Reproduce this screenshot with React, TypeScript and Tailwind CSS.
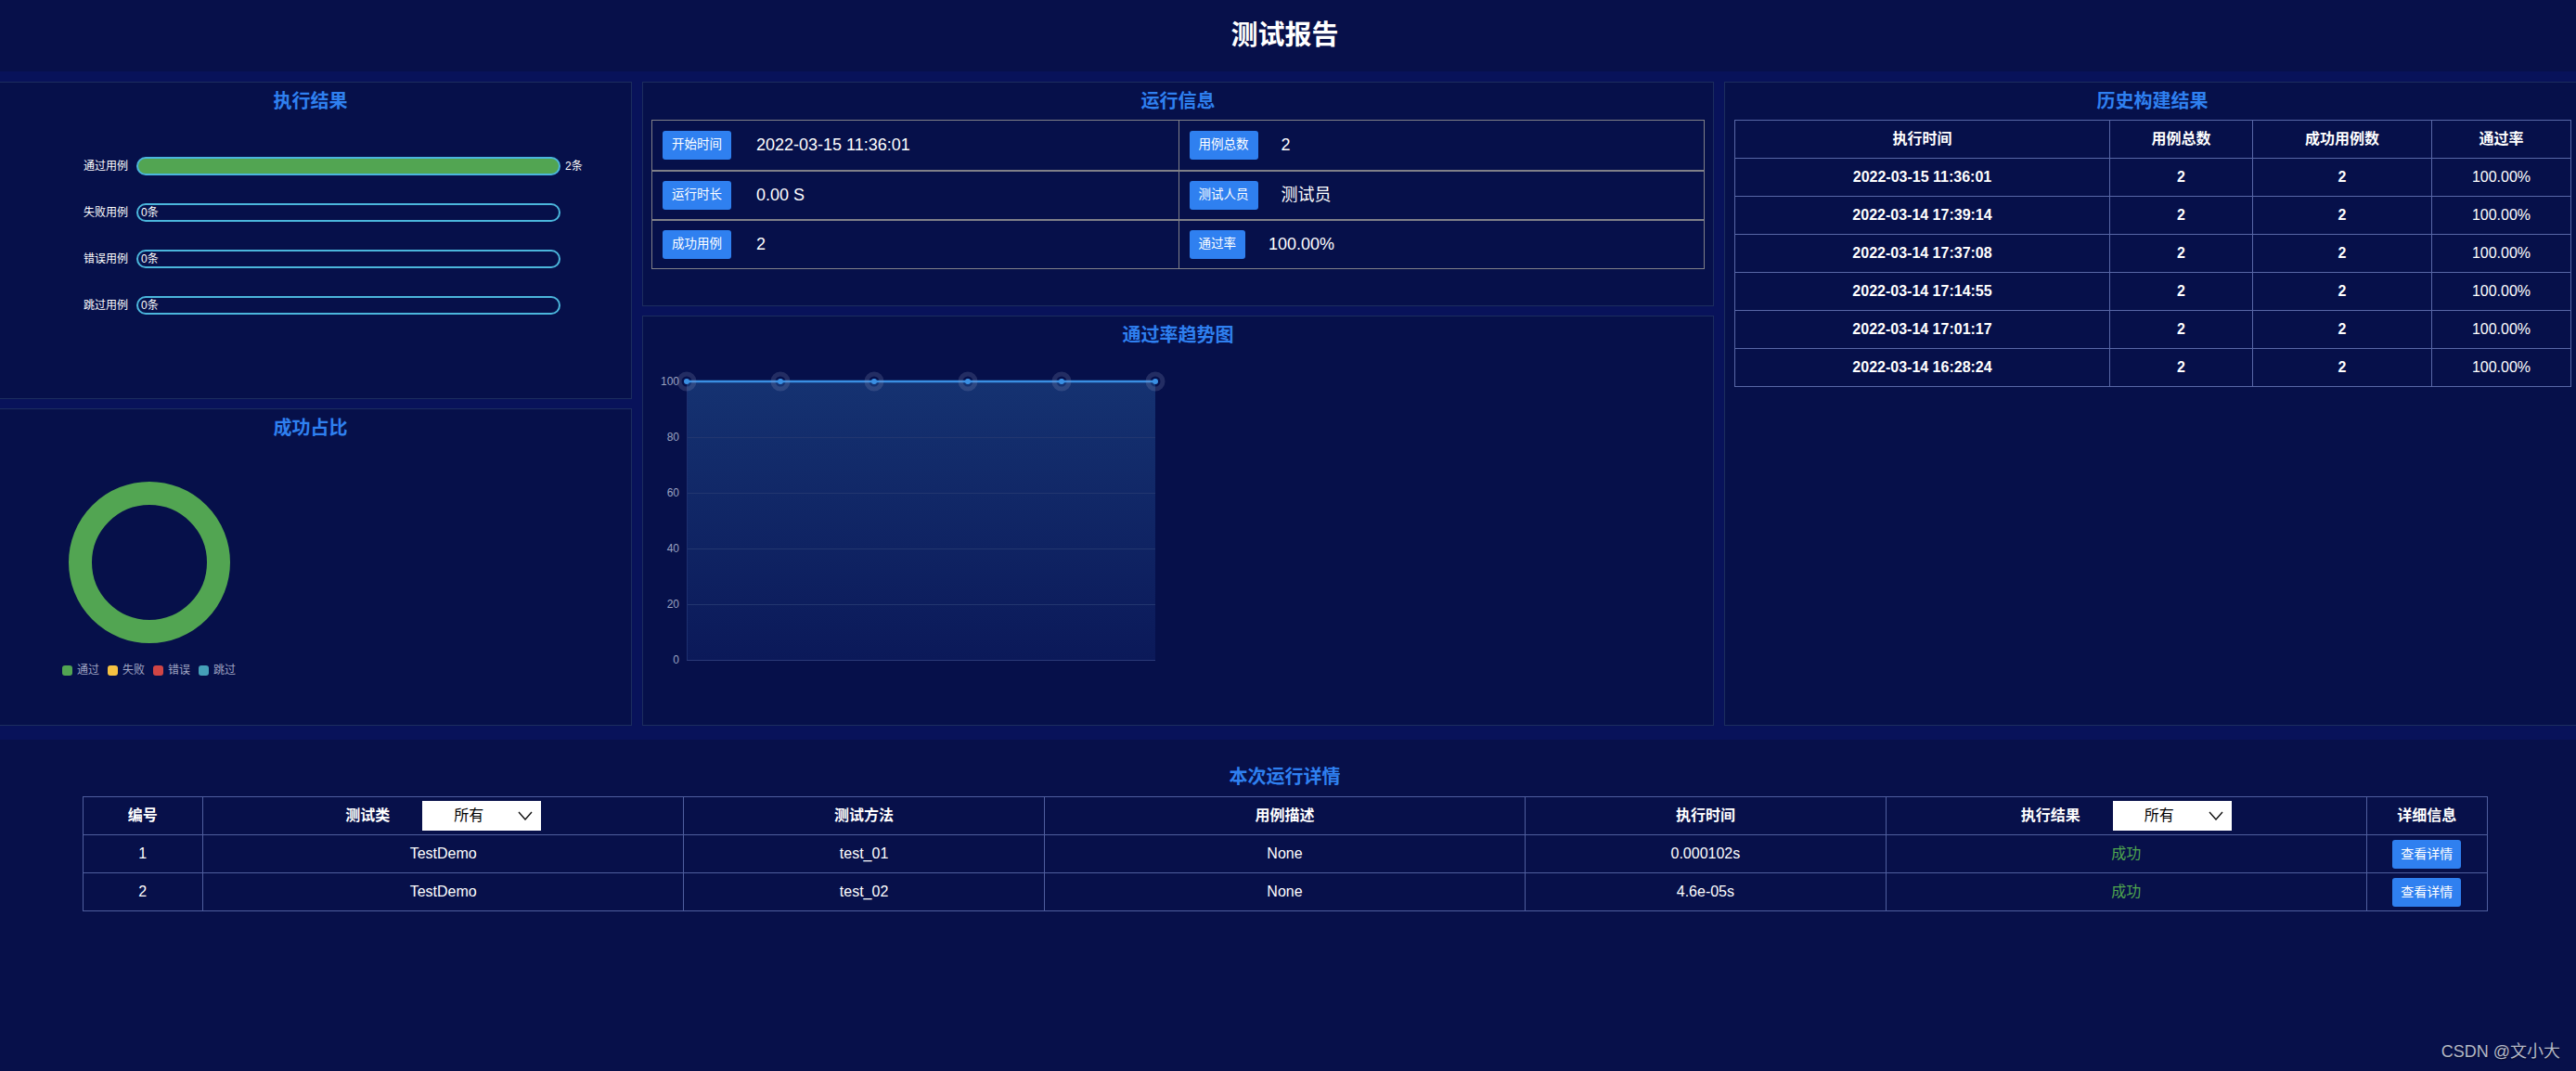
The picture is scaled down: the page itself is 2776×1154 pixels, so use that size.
import { FC, ReactNode } from 'react';

const Panel: FC<{ title: string; className: string; children?: ReactNode }> = ({ title, className, children }) => (
  <div className={`border border-[#1c2d5e] bg-[#06104a] ${className}`}>
    <h3 className="pt-2 text-center text-[20px] leading-6 font-bold text-[#2f80f0]">{title}</h3>
    {children}
  </div>
);

const bars = [
  { label: '通过用例', count: 2 },
  { label: '失败用例', count: 0 },
  { label: '错误用例', count: 0 },
  { label: '跳过用例', count: 0 },
];

const legend = [
  { label: '通过', color: 'bg-[#52a552]' },
  { label: '失败', color: 'bg-[#f5c242]' },
  { label: '错误', color: 'bg-[#d04545]' },
  { label: '跳过', color: 'bg-[#45a0b8]' },
];

const runInfo = [
  [
    { tag: '开始时间', value: '2022-03-15 11:36:01' },
    { tag: '用例总数', value: '2' },
  ],
  [
    { tag: '运行时长', value: '0.00 S' },
    { tag: '测试人员', value: '测试员' },
  ],
  [
    { tag: '成功用例', value: '2' },
    { tag: '通过率', value: '100.00%' },
  ],
];

const history = [
  '2022-03-15 11:36:01',
  '2022-03-14 17:39:14',
  '2022-03-14 17:37:08',
  '2022-03-14 17:14:55',
  '2022-03-14 17:01:17',
  '2022-03-14 16:28:24',
];

const details = [
  { id: 1, cls: 'TestDemo', method: 'test_01', desc: 'None', time: '0.000102s' },
  { id: 2, cls: 'TestDemo', method: 'test_02', desc: 'None', time: '4.6e-05s' },
];

const Tag: FC<{ children: ReactNode }> = ({ children }) => (
  <span className="flex h-[31px] items-center rounded-[3px] bg-[#2f80f0] px-[10px] text-[13.5px] text-white">
    {children}
  </span>
);

const FakeSelect: FC = () => (
  <div className="flex h-[32px] w-[128px] items-center bg-white pl-[34px] pr-[8px] text-[16px] font-normal text-black">
    <span>所有</span>
    <svg width="16" height="10" viewBox="0 0 16 10" className="ml-auto mr-[1px]">
      <polyline points="1,1 8,9 15,1" fill="none" stroke="#111" strokeWidth="1.4" />
    </svg>
  </div>
);

const TrendChart: FC = () => {
  const y = (v: number) => 338 - v * 3;
  const xs = [0, 1, 2, 3, 4, 5].map((i) => 47 + i * 101);
  return (
    <svg width="1153" height="400" className="block">
      <defs>
        <linearGradient id="area" x1="0" y1="0" x2="0" y2="1">
          <stop offset="0" stopColor="#153271" />
          <stop offset="1" stopColor="#0b1959" />
        </linearGradient>
      </defs>
      <rect x={47} y={y(100)} width={505} height={300} fill="url(#area)" />
      {[80, 60, 40, 20].map((v) => (
        <line key={v} x1={47} x2={552} y1={y(v) + 0.5} y2={y(v) + 0.5} stroke="#22366f" />
      ))}
      <line x1={47} x2={552} y1={y(0) + 0.5} y2={y(0) + 0.5} stroke="#2a3a78" />
      <line x1={47.5} x2={47.5} y1={y(100)} y2={y(0)} stroke="#1d3070" />
      {[100, 80, 60, 40, 20, 0].map((v) => (
        <text key={v} x={39} y={y(v) + 4} textAnchor="end" fontSize="12" fill="#9aa2c0">
          {v}
        </text>
      ))}
      <line x1={47} x2={552} y1={y(100)} y2={y(100)} stroke="#3a8fe3" strokeWidth="2.5" />
      {xs.map((x) => (
        <g key={x}>
          <circle cx={x} cy={y(100)} r={8} fill="none" stroke="rgba(140,150,190,0.22)" strokeWidth="5" />
          <circle cx={x} cy={y(100)} r={3} fill="#3a8fe3" />
        </g>
      ))}
    </svg>
  );
};

const App: FC = () => {
  return (
    <div className="relative min-h-screen overflow-hidden bg-[#07104a] font-['Liberation_Sans','Noto_Sans_CJK_SC',sans-serif]">
      <div className="-ml-[12px] w-[2793px]">
        <header className="flex h-[77px] items-center justify-center text-[29px] font-bold text-white">测试报告</header>

        <div className="bg-[#08125a] pt-[11px] pb-[15px]">
          <div className="grid grid-cols-[693px_1155px_923px] gap-[11px]">
            <div className="flex flex-col gap-[10px]">
              <Panel title="执行结果" className="h-[342px]">
                <div className="mt-[33px]">
                  {bars.map((b) => (
                    <div key={b.label} className="flex h-[50px] items-center pl-[91px]">
                      <span className="w-[58px] text-right text-[12px] text-white">{b.label}</span>
                      {b.count > 0 ? (
                        <>
                          <div className="ml-[9px] h-[20px] w-[457px] rounded-full border-2 border-[#4bb6dc] bg-[#52a552]" />
                          <span className="ml-[5px] text-[12px] text-white">{b.count}条</span>
                        </>
                      ) : (
                        <div className="ml-[9px] flex h-[20px] w-[457px] items-center rounded-full border-2 border-[#4bb6dc] pl-[3px] text-[12px] text-white">
                          {b.count}条
                        </div>
                      )}
                    </div>
                  ))}
                </div>
              </Panel>
              <Panel title="成功占比" className="h-[342px]">
                <div className="mt-[46px] pl-[85px]">
                  <svg width="174" height="174" className="block">
                    <circle cx="87" cy="87" r="74.5" fill="none" stroke="#52a552" strokeWidth="25" />
                  </svg>
                </div>
                <div className="mt-[20px] flex gap-[9px] pl-[78px]">
                  {legend.map((l) => (
                    <div key={l.label} className="flex items-center gap-[5px] text-[12px] text-[#a0a6c4]">
                      <span className={`h-[11px] w-[11px] rounded-[3px] ${l.color}`} />
                      {l.label}
                    </div>
                  ))}
                </div>
              </Panel>
            </div>

            <div className="flex flex-col gap-[10px]">
              <Panel title="运行信息" className="h-[242px]">
                <div className="mx-[9px] mt-2 border border-[#808088]">
                  {runInfo.map((row, i) => (
                    <div
                      key={i}
                      className={i > 0 ? 'grid h-[53px] grid-cols-2 border-t-2 border-[#808088]' : 'grid h-[53px] grid-cols-2'}
                    >
                      {row.map((c, j) => (
                        <div
                          key={c.tag}
                          className={
                            j > 0
                              ? 'flex items-center gap-[25px] border-l border-[#808088] pl-[11px]'
                              : 'flex items-center gap-[27px] pl-[11px]'
                          }
                        >
                          <Tag>{c.tag}</Tag>
                          <span className="text-[18px] text-white">{c.value}</span>
                        </div>
                      ))}
                    </div>
                  ))}
                </div>
              </Panel>
              <Panel title="通过率趋势图" className="h-[442px]">
                <TrendChart />
              </Panel>
            </div>

            <Panel title="历史构建结果" className="h-[694px]">
              <table className="mx-[10px] mt-2 w-[901px] table-fixed border-collapse text-[16px] font-bold text-white">
                <colgroup>
                  <col className="w-[404px]" />
                  <col className="w-[154px]" />
                  <col className="w-[193px]" />
                  <col className="w-[150px]" />
                </colgroup>
                <thead>
                  <tr className="h-[41px]">
                    {['执行时间', '用例总数', '成功用例数', '通过率'].map((h) => (
                      <th key={h} className="border border-[#5867a6] text-center">
                        {h}
                      </th>
                    ))}
                  </tr>
                </thead>
                <tbody>
                  {history.map((t) => (
                    <tr key={t} className="h-[41px]">
                      <td className="border border-[#5867a6] text-center">{t}</td>
                      <td className="border border-[#5867a6] text-center">2</td>
                      <td className="border border-[#5867a6] text-center">2</td>
                      <td className="border border-[#5867a6] text-center font-normal">100.00%</td>
                    </tr>
                  ))}
                </tbody>
              </table>
            </Panel>
          </div>
        </div>

        <section className="pt-[28px]">
          <h3 className="text-center text-[20px] leading-6 font-bold text-[#2f80f0]">本次运行详情</h3>
          <table className="mx-auto mt-[9px] w-[2592px] table-fixed border-collapse text-[16px] text-white">
            <colgroup>
              <col className="w-[5%]" />
              <col className="w-[20%]" />
              <col className="w-[15%]" />
              <col className="w-[20%]" />
              <col className="w-[15%]" />
              <col className="w-[20%]" />
              <col className="w-[5%]" />
            </colgroup>
            <thead>
              <tr className="h-[41px] font-bold">
                <th className="border border-[#4f5e9e]">编号</th>
                <th className="border border-[#4f5e9e]">
                  <div className="flex items-center justify-center gap-[35px]">
                    <span>测试类</span>
                    <FakeSelect />
                  </div>
                </th>
                <th className="border border-[#4f5e9e]">测试方法</th>
                <th className="border border-[#4f5e9e]">用例描述</th>
                <th className="border border-[#4f5e9e]">执行时间</th>
                <th className="border border-[#4f5e9e]">
                  <div className="flex items-center justify-center gap-[35px]">
                    <span>执行结果</span>
                    <FakeSelect />
                  </div>
                </th>
                <th className="border border-[#4f5e9e]">详细信息</th>
              </tr>
            </thead>
            <tbody>
              {details.map((d) => (
                <tr key={d.id} className="h-[41px] text-center">
                  <td className="border border-[#4f5e9e]">{d.id}</td>
                  <td className="border border-[#4f5e9e]">{d.cls}</td>
                  <td className="border border-[#4f5e9e]">{d.method}</td>
                  <td className="border border-[#4f5e9e]">{d.desc}</td>
                  <td className="border border-[#4f5e9e]">{d.time}</td>
                  <td className="border border-[#4f5e9e] text-[#4fa64f]">成功</td>
                  <td className="border border-[#4f5e9e]">
                    <button className="h-[31px] w-[74px] rounded-[3px] bg-[#2f80f0] text-[14px] text-white">查看详情</button>
                  </td>
                </tr>
              ))}
            </tbody>
          </table>
        </section>
      </div>

      <span className="absolute right-[17px] bottom-[7px] text-[18px] text-[#b4b8c8] [text-shadow:0_1px_1px_rgba(0,0,0,0.5)]">
        CSDN @文小大
      </span>
    </div>
  );
};

export default App;
